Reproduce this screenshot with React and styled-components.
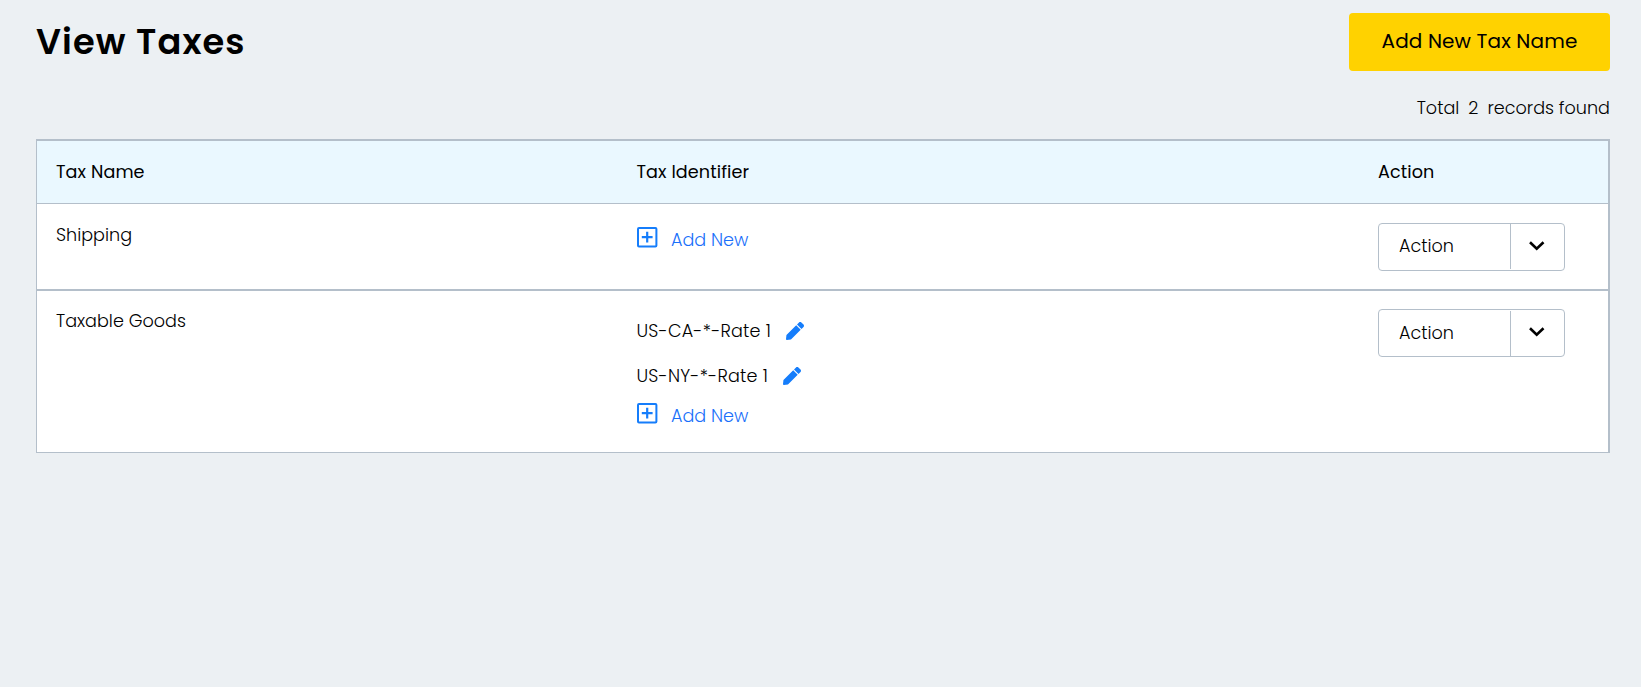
import React from "react";
import styled, { createGlobalStyle } from "styled-components";
import { FaPen } from "react-icons/fa";

const GlobalStyle = createGlobalStyle`
  * { box-sizing: border-box; }
  body {
    margin: 0;
    background: #ecf0f3;
    color: #000;
    font-family: Poppins, Inter, "Open Sans", sans-serif;
    font-size: 17.6px;
    font-weight: 300;
  }
`;

const Page = styled.main`
  min-height: 100vh;
  padding: 13px 31px 0 36px;
`;

const Header = styled.header`
  display: flex;
  justify-content: space-between;
  align-items: flex-start;
`;

const Title = styled.h1`
  margin: 9px 0 0;
  font-size: 35.2px;
  line-height: 40px;
  font-weight: 600;
  letter-spacing: 1.1px;
  white-space: nowrap;
`;

const PrimaryButton = styled.button`
  width: 261px;
  height: 58px;
  padding: 0 0 2px;
  border: 0;
  border-radius: 4px;
  background: #ffd200;
  color: #000;
  font: 400 20px/24px Poppins, Inter, sans-serif;
  letter-spacing: 0.12px;
  white-space: nowrap;
`;

const Total = styled.p`
  display: flex;
  justify-content: flex-end;
  gap: 9px;
  height: 68px;
  margin: 0;
  padding-top: 25px;
  line-height: 24px;
`;

const Table = styled.div`
  border: solid #b4bfca;
  border-width: 2px 2px 1px 1px;
  background: #fff;
`;

const Row = styled.div`
  display: grid;
  grid-template-columns: 580.5px 741.5px 1fr;
  height: ${(p) => p.$height}px;
  padding-left: 19px;
  border-bottom: ${(p) => p.$line || 0}px solid #b4bfca;
`;

const HeadRow = styled(Row)`
  align-items: center;
  background: #eaf8ff;
  font-weight: 400;
  letter-spacing: 0.1px;
`;

const Label = styled.span`
  line-height: 24px;
  white-space: nowrap;
`;

const NameCell = styled.div`
  padding-top: ${(p) => p.$top}px;
`;

const IdentifierCell = styled.div`
  padding-top: ${(p) => p.$top}px;
`;

const ActionCell = styled.div`
  padding-top: ${(p) => p.$top}px;
`;

const Rate = styled.div`
  display: flex;
  align-items: center;
  gap: 15px;
  height: 45px;
  letter-spacing: 0.2px;
  svg { color: #157dfb; }
`;

const AddLink = styled.a`
  display: flex;
  gap: 13.5px;
  margin-top: ${(p) => p.$gap || 0}px;
  color: #1a70fa;
  svg { flex: none; }
  span { padding-top: 1px; }
`;

const ActionSelect = styled.div`
  display: flex;
  width: 187px;
  height: 48px;
  border: 1px solid #b4bfca;
  border-radius: 4px;
`;

const SelectText = styled.div`
  width: 132px;
  height: 45px;
  margin-top: ${(p) => p.$shift}px;
  padding: 9px 0 0 20px;
  border-right: 1px solid #b4bfca;
`;

const SelectArrow = styled.div`
  flex: 1;
  padding: 17px 0 0 17.5px;
  svg { display: block; }
`;

const PlusIcon = () => (
  <svg width="21" height="21" viewBox="0 0 21 21" fill="none" stroke="#157dfb" strokeWidth="2">
    <rect x="1" y="1" width="18.4" height="18.4" rx="1" />
    <path d="M10.2 4.8v10.8M4.8 10.2h10.8" strokeWidth="2.2" />
  </svg>
);

const AddNew = ({ gap }) => (
  <AddLink $gap={gap}>
    <PlusIcon />
    <Label>Add New</Label>
  </AddLink>
);

const Action = ({ shift = 0 }) => (
  <ActionSelect>
    <SelectText $shift={shift}>
      <Label>Action</Label>
    </SelectText>
    <SelectArrow>
      <svg width="16" height="10" viewBox="0 0 16 10" fill="none" stroke="#000" strokeWidth="2.6">
        <path d="M1 1.3 7.7 7.8l6.8-6.5" />
      </svg>
    </SelectArrow>
  </ActionSelect>
);

export default function App() {
  return (
    <Page>
      <GlobalStyle />
      <Header>
        <Title>View Taxes</Title>
        <PrimaryButton>Add New Tax Name</PrimaryButton>
      </Header>
      <Total>
        <span>Total</span>
        <span>2</span>
        <span>records found</span>
      </Total>
      <Table>
        <HeadRow $height={63} $line={1}>
          <Label>Tax Name</Label>
          <Label>Tax Identifier</Label>
          <Label>Action</Label>
        </HeadRow>
        <Row $height={87} $line={2}>
          <NameCell $top={18}><Label>Shipping</Label></NameCell>
          <IdentifierCell $top={23}><AddNew /></IdentifierCell>
          <ActionCell $top={19}><Action /></ActionCell>
        </Row>
        <Row $height={161}>
          <NameCell $top={17}><Label>Taxable Goods</Label></NameCell>
          <IdentifierCell $top={17}>
            <Rate><Label>US-CA-*-Rate 1</Label><FaPen size={18} /></Rate>
            <Rate><Label>US-NY-*-Rate 1</Label><FaPen size={18} /></Rate>
            <AddNew gap={5} />
          </IdentifierCell>
          <ActionCell $top={18}><Action shift={1} /></ActionCell>
        </Row>
      </Table>
    </Page>
  );
}
